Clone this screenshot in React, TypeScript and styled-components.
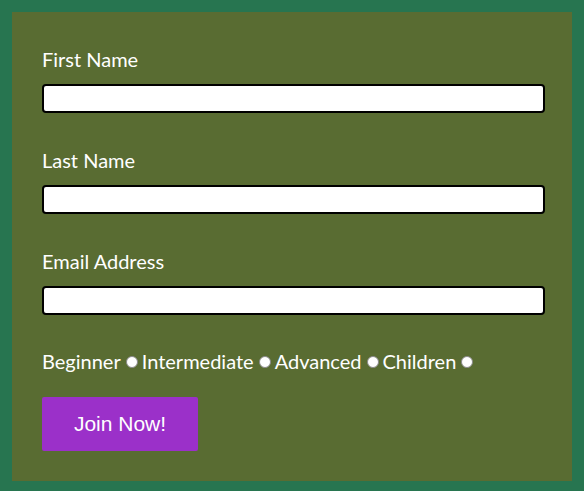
import React from "react";
import styled, { createGlobalStyle } from "styled-components";

const Global = createGlobalStyle`
  html, body { margin: 0; padding: 0; background: #277550; }
  body { width: 584px; height: 491px; overflow: hidden; }
  * { box-sizing: border-box; }
`;

const Page = styled.div`
  padding: 12px 12px 10px 12px;
  height: 491px;
  display: flex;
`;

const Form = styled.form`
  flex: 1;
  background: #596c32;
  padding: 35px 27px 0 30px;
  display: flex;
  flex-direction: column;
  font-family: Lato, "Noto Sans", sans-serif;
  color: #ffffff;
`;

const Field = styled.div`
  display: flex;
  flex-direction: column;
  gap: 13px;
  margin-bottom: 35px;
`;

const Label = styled.label`
  font-size: 20px;
  line-height: 24px;
`;

const Input = styled.input`
  height: 29px;
  width: 100%;
  border: 2px solid #000;
  border-radius: 4px;
  background: #fff;
  padding: 0 6px;
`;

const Levels = styled.div`
  display: flex;
  align-items: center;
  font-size: 20px;
  line-height: 24px;
  gap: 4px;
  margin-top: -1px;
`;

const Level = styled.label`
  display: inline-flex;
  align-items: center;
  gap: 5px;
`;

const Radio = styled.span`
  width: 12px;
  height: 12px;
  border-radius: 50%;
  background: #fff;
  border: 1px solid #8a8a8a;
  display: inline-block;
  margin-top: 2px;
`;

const Button = styled.button`
  margin-top: 24px;
  width: 156px;
  height: 54px;
  background: #9b30c9;
  border: none;
  border-radius: 2px;
  color: #fff;
  font-family: "Liberation Sans", Arial, sans-serif;
  font-size: 21px;
  align-self: flex-start;
`;

export default function App() {
  return (
    <>
      <Global />
      <Page>
        <Form onSubmit={(e) => e.preventDefault()}>
          <Field>
            <Label>First Name</Label>
            <Input type="text" />
          </Field>
          <Field>
            <Label>Last Name</Label>
            <Input type="text" />
          </Field>
          <Field>
            <Label>Email Address</Label>
            <Input type="email" />
          </Field>
          <Levels>
            {["Beginner", "Intermediate", "Advanced", "Children"].map((l) => (
              <Level key={l}>
                {l}
                <Radio />
              </Level>
            ))}
          </Levels>
          <Button type="submit">Join Now!</Button>
        </Form>
      </Page>
    </>
  );
}
